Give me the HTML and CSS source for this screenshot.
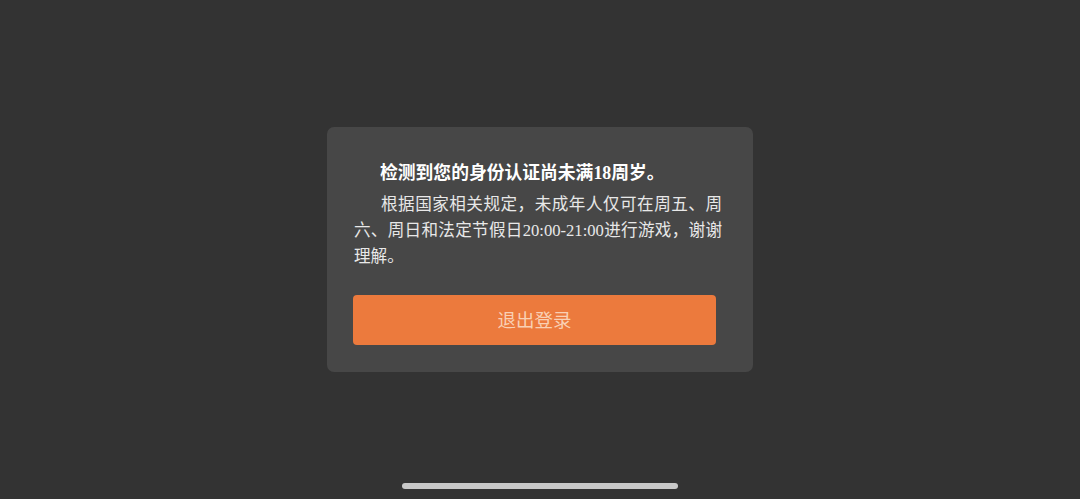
FILE: index.html
```html
<!DOCTYPE html>
<html lang="zh-CN">
<head>
    <meta charset="UTF-8">
    <meta name="viewport" content="width=device-width, initial-scale=1.0">
    <title>实名认证提示</title>
    <link rel="stylesheet" href="styles.css">
</head>
<body>
    <div class="screen">
        <!-- 未成年提示弹窗 -->
        <div class="dialog">
            <h2 class="dialog-title">检测到您的身份认证尚未满18周岁。</h2>
            <p class="dialog-text">根据国家相关规定，未成年人仅可在周五、周六、周日和法定节假日20:00-21:00进行游戏，谢谢理解。</p>
            <button class="logout-btn">退出登录</button>
        </div>
        <div class="home-bar"></div>
    </div>
</body>
</html>
```

FILE: styles.css
```css
html, body {
    margin: 0;
    padding: 0;
}
body {
    background-color: #333333;
    font-family: "Liberation Serif", "Noto Sans CJK SC", serif;
}
.screen {
    position: relative;
    height: 499px;
    display: flex;
    align-items: center;
    justify-content: center;
}
.dialog {
    width: 426px;
    box-sizing: border-box;
    padding: 33px 31px 27px 27px;
    background-color: #474747;
    border-radius: 7px;
}
.dialog-title {
    margin: 0 0 6px 0;
    font-size: 17.8px;
    line-height: 26px;
    font-weight: bold;
    color: #ffffff;
    text-indent: 26px;
}
.dialog-text {
    margin: 0;
    font-size: 16.6px;
    line-height: 26px;
    color: #e8e8e8;
    text-indent: 27px;
    text-align: justify;
}
.logout-btn {
    display: block;
    width: 363px;
    height: 50px;
    margin: 25px 0 0 -1px;
    padding: 0 0 3px 0;
    border: none;
    border-radius: 4px;
    background-color: #ec7a3d;
    color: #f9d0b4;
    font-family: "Noto Sans CJK SC", sans-serif;
    font-size: 18.5px;
    cursor: pointer;
}
.home-bar {
    position: absolute;
    left: 402px;
    bottom: 10px;
    width: 276px;
    height: 6px;
    border-radius: 3px;
    background-color: #c8c8c8;
}
```
